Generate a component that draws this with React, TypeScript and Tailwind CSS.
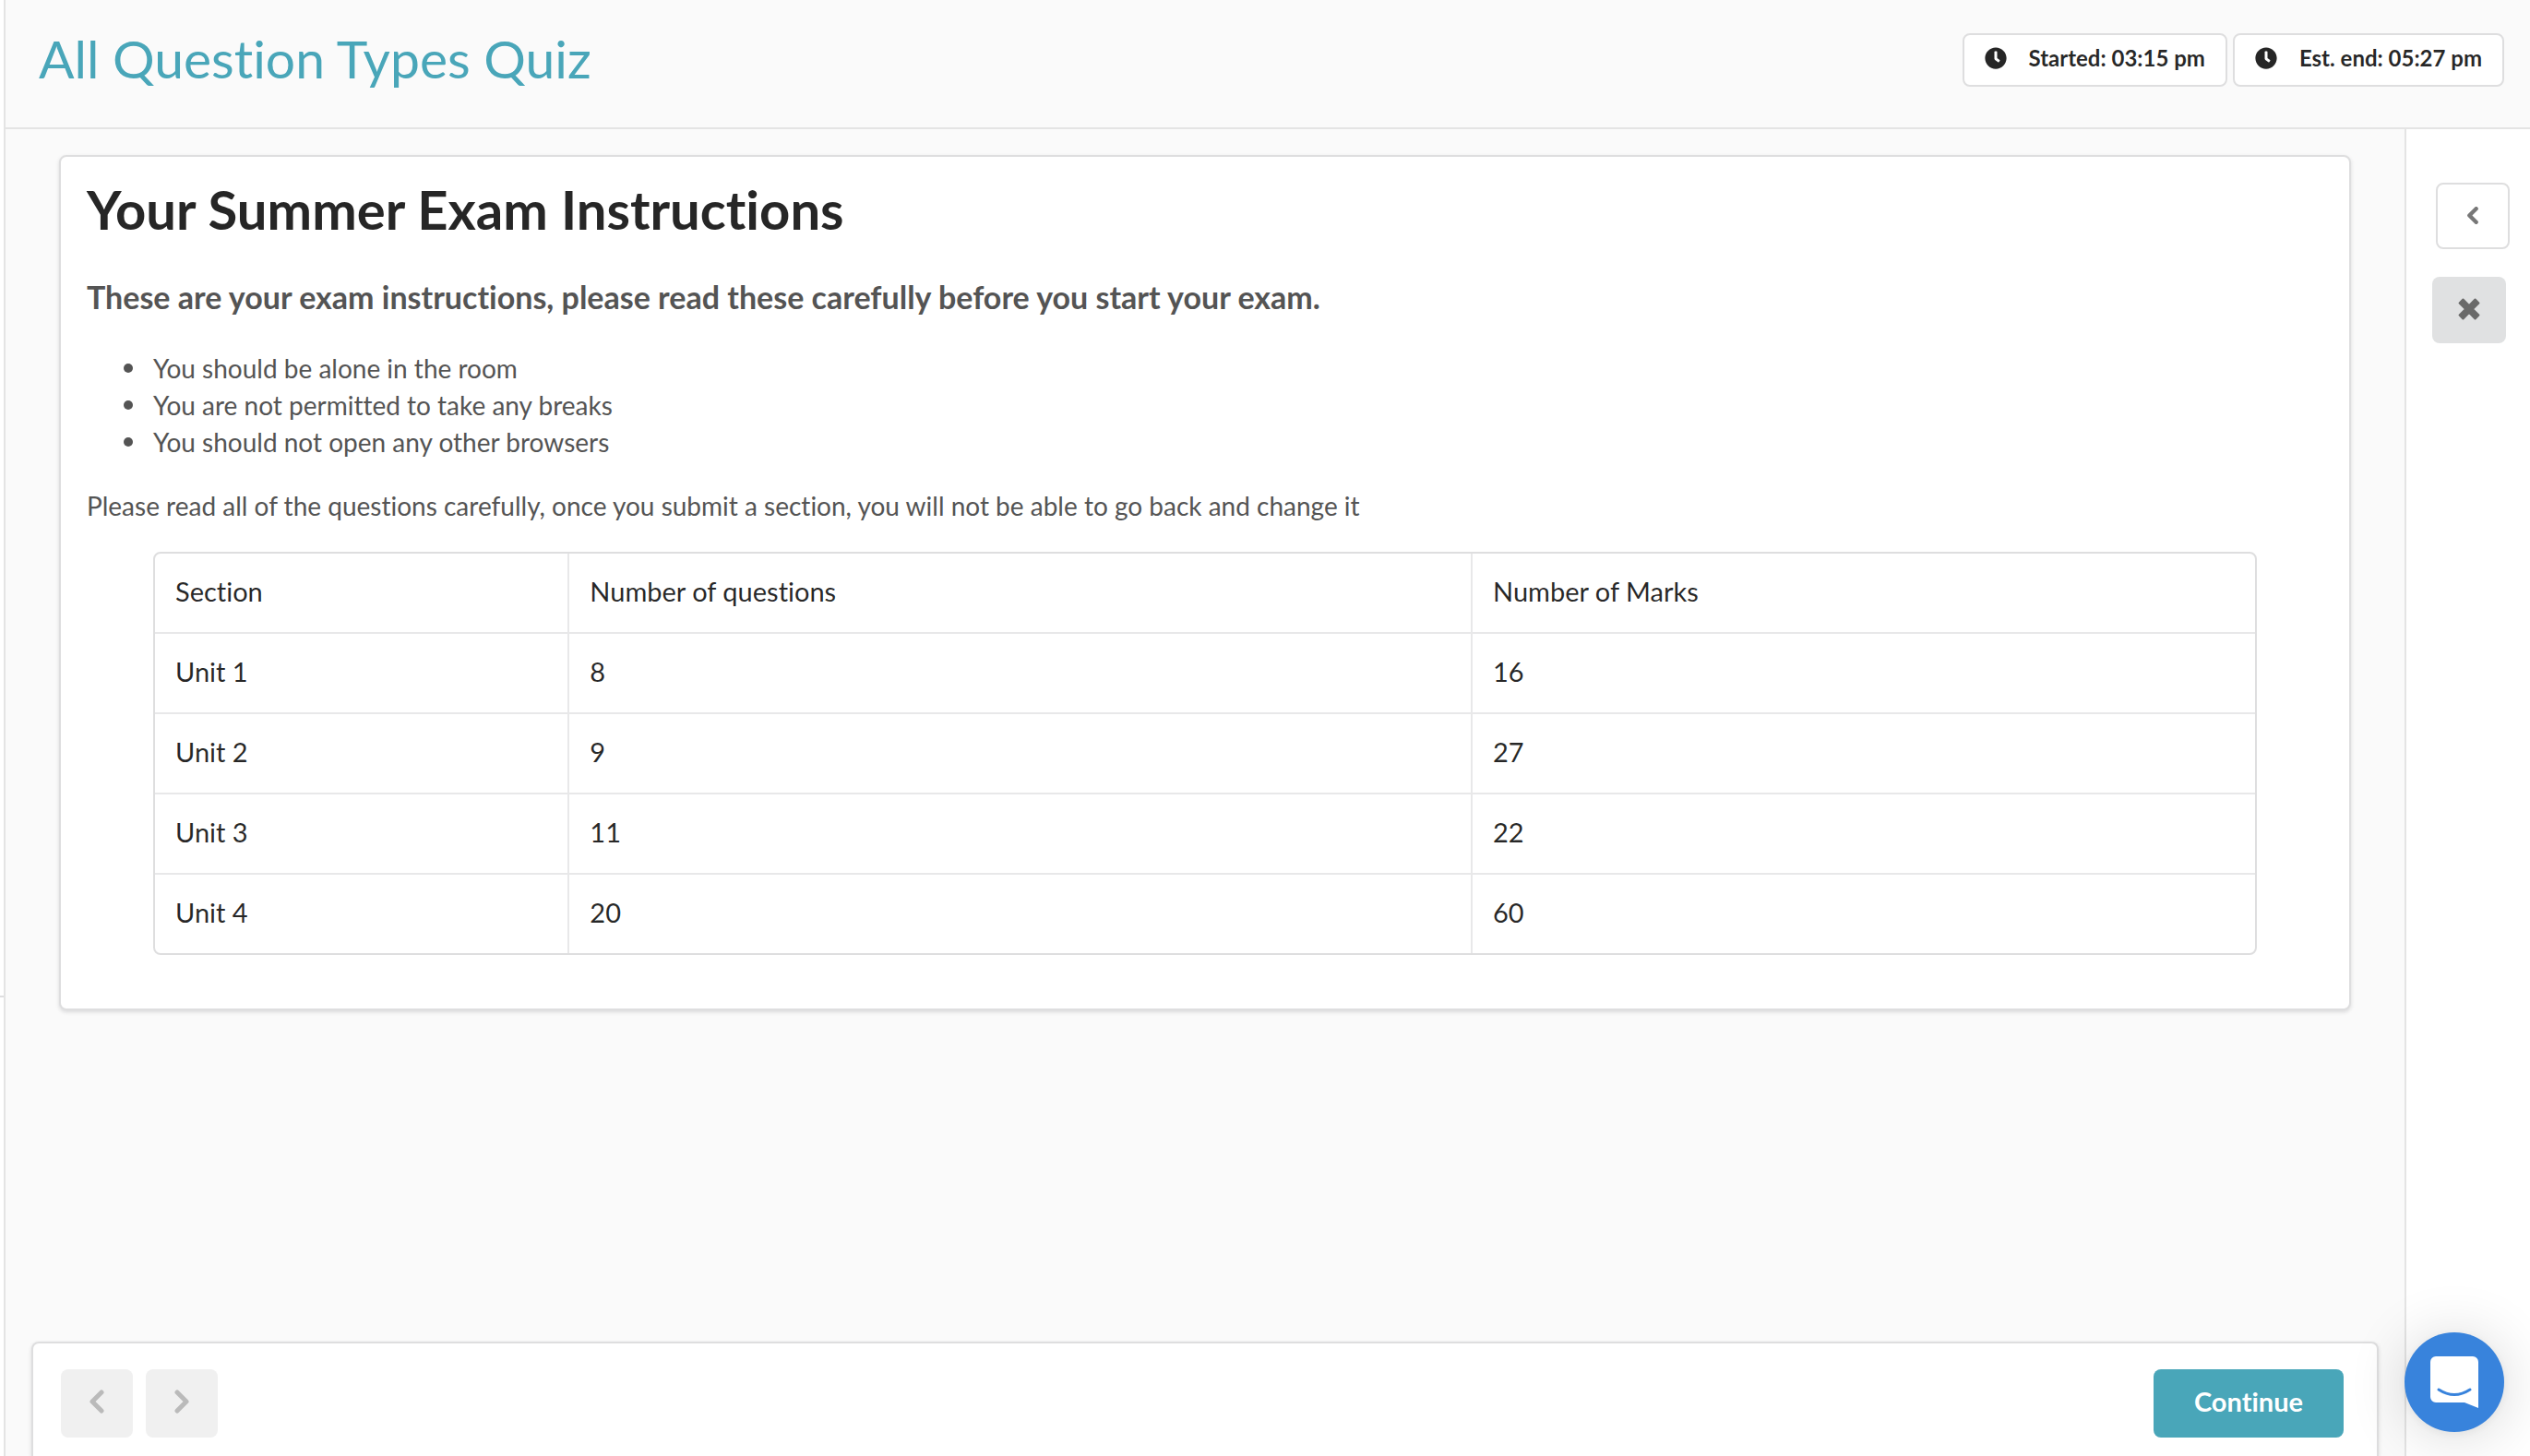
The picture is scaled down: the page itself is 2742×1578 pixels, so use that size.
import { FaClock } from "react-icons/fa";

const INSTRUCTIONS = [
  "You should be alone in the room",
  "You are not permitted to take any breaks",
  "You should not open any other browsers",
];

const SECTIONS = [
  { name: "Unit 1", questions: 8, marks: 16 },
  { name: "Unit 2", questions: 9, marks: 27 },
  { name: "Unit 3", questions: 11, marks: 22 },
  { name: "Unit 4", questions: 20, marks: 60 },
];

function Chevron({ className, flip, weight = 5 }: { className: string; flip?: boolean; weight?: number }) {
  return (
    <svg viewBox="0 0 16 26" className={className} fill="none" stroke="currentColor" strokeLinecap="round" strokeLinejoin="round">
      <path d={flip ? "M3 3l10 10L3 23" : "M13 3L3 13l10 10"} strokeWidth={weight} />
    </svg>
  );
}

function TimeLabel({ label, time }: { label: string; time: string }) {
  return (
    <div className="flex items-center gap-6 rounded-lg border-2 border-[#dededf] bg-white px-[22px] pt-[10px] pb-[14px] text-2xl leading-[30px] font-bold">
      <FaClock size={24} />
      <span>{label}: {time}</span>
    </div>
  );
}

function Header() {
  return (
    <header className="flex items-start justify-between border-b-2 border-[#e4e4e4] pt-9 pr-7 pb-11 pl-9 text-black/85">
      <h1 className="text-[57px] leading-[54px] text-[#49a6b9]">All Question Types Quiz</h1>
      <div className="flex gap-[6px]">
        <TimeLabel label="Started" time="03:15 pm" />
        <TimeLabel label="Est. end" time="05:27 pm" />
      </div>
    </header>
  );
}

function SectionTable() {
  return (
    <div className="mx-[72px] overflow-hidden rounded-lg border-2 border-[#dededf]">
      <table className="w-full table-fixed border-collapse text-left text-[29px] leading-10 text-black/85">
        <colgroup>
          <col className="w-[19.7%]" />
          <col className="w-[43%]" />
          <col />
        </colgroup>
        <thead>
          <tr>
            {["Section", "Number of questions", "Number of Marks"].map((h) => (
              <th key={h} className="border-l-2 border-[#e8e8e9] px-[22px] pt-[21px] pb-6 font-normal first:border-l-0">{h}</th>
            ))}
          </tr>
        </thead>
        <tbody>
          {SECTIONS.map((s) => (
            <tr key={s.name} className="border-t-2 border-[#e8e8e9]">
              {[s.name, s.questions, s.marks].map((v, i) => (
                <td key={i} className="border-l-2 border-[#e8e8e9] px-[22px] pt-[21px] pb-6 first:border-l-0">{v}</td>
              ))}
            </tr>
          ))}
        </tbody>
      </table>
    </div>
  );
}

function InstructionsCard() {
  return (
    <section className="mx-[58px] mt-7 rounded-lg border-2 border-[#dededf] bg-white px-7 pt-[25px] pb-[58px] shadow-[0_2px_4px_rgba(34,36,38,0.15)]">
      <h2 className="text-[58px] leading-[64px] font-bold text-black/85">Your Summer Exam Instructions</h2>
      <h3 className="mt-[42px] text-[34px] leading-[42px] font-bold">
        These are your exam instructions, please read these carefully before you start your exam.
      </h3>
      <ul className="mt-9 mb-[29px] pl-10">
        {INSTRUCTIONS.map((text) => (
          <li
            key={text}
            className="flex items-center gap-[22px] before:size-[10px] before:rounded-full before:bg-[#545454]"
          >
            {text}
          </li>
        ))}
      </ul>
      <p className="mb-[30px]">
        Please read all of the questions carefully, once you submit a section, you will not be able to go back and change it
      </p>
      <SectionTable />
    </section>
  );
}

function FooterNav() {
  return (
    <footer className="mx-7 flex justify-between rounded-t-lg border-2 border-b-0 border-[#dededf] bg-white pt-7 pr-9 pb-5 pl-[30px] shadow-[0_2px_4px_rgba(34,36,38,0.15)]">
      <div className="flex gap-[14px]">
        <button disabled aria-label="Previous" className="flex h-[74px] w-[78px] items-center justify-center rounded-lg bg-[#f0f0f0] pb-1 text-[#bababa]">
          <Chevron className="h-[26px] w-4" />
        </button>
        <button disabled aria-label="Next" className="flex h-[74px] w-[78px] items-center justify-center rounded-lg bg-[#f0f0f0] pb-1 text-[#bababa]">
          <Chevron flip className="h-[26px] w-4" />
        </button>
      </div>
      <button className="h-[74px] rounded-lg bg-[#49a6b9] px-11 pb-1 text-[29px] font-bold text-white">Continue</button>
    </footer>
  );
}

function ToolRail() {
  return (
    <aside className="flex w-[136px] shrink-0 flex-col items-start gap-[30px] border-l-2 border-[#e4e4e4] bg-white pt-[58px] pl-7">
      <button aria-label="Expand panel" className="ml-1 flex h-[72px] w-20 items-center justify-center rounded-lg border-2 border-[#dededf] bg-white pb-[2px] text-[#777]">
        <Chevron className="h-[19px] w-3" weight={6} />
      </button>
      <button aria-label="Close" className="flex h-[72px] w-20 items-center justify-center rounded-lg bg-[#e0e1e2] pb-[2px] text-[#6a6a6a]">
        <svg viewBox="0 0 22 22" className="size-6" fill="currentColor" stroke="currentColor" strokeWidth="2" strokeLinejoin="round">
          <path d="M5 1.500L11 7.500l6-6L20.500 5l-6 6 6 6L17 20.500l-6-6-6 6L1.500 17l6-6-6-6z" />
        </svg>
      </button>
    </aside>
  );
}

function ChatLauncher() {
  return (
    <button
      aria-label="Open chat"
      className="fixed right-7 bottom-[26px] flex size-[108px] items-center justify-center rounded-full bg-[#3883dc] shadow-[0_2px_12px_rgba(0,0,0,0.06),0_4px_64px_rgba(0,0,0,0.16)]"
    >
      <svg viewBox="0 0 52 56" className="h-14 w-[52px]">
        <path d="M6 0h40a6 6 0 016 6v50l-15-6H6a6 6 0 01-6-6V6a6 6 0 016-6z" fill="#fff" />
        <path d="M9 36q17 11 34 0" fill="none" stroke="#3883dc" strokeWidth="3" strokeLinecap="round" />
      </svg>
    </button>
  );
}

export default function App() {
  return (
    <div className="flex min-h-screen bg-white font-[Lato,sans-serif] text-[28px] leading-10 text-[#545454] [font-variant-ligatures:none]">
      {/* edge of the collapsed menu */}
      <div className="flex w-1 flex-col">
        <div className="h-[1081px] border-b-2 border-[#dededf]" />
      </div>
      <div className="flex flex-1 flex-col border-l-2 border-[#e4e4e4] bg-[#fafafa]">
        <Header />
        <div className="flex flex-1">
          <main className="flex flex-1 flex-col justify-between">
            <InstructionsCard />
            <FooterNav />
          </main>
          <ToolRail />
        </div>
      </div>
      <ChatLauncher />
    </div>
  );
}
